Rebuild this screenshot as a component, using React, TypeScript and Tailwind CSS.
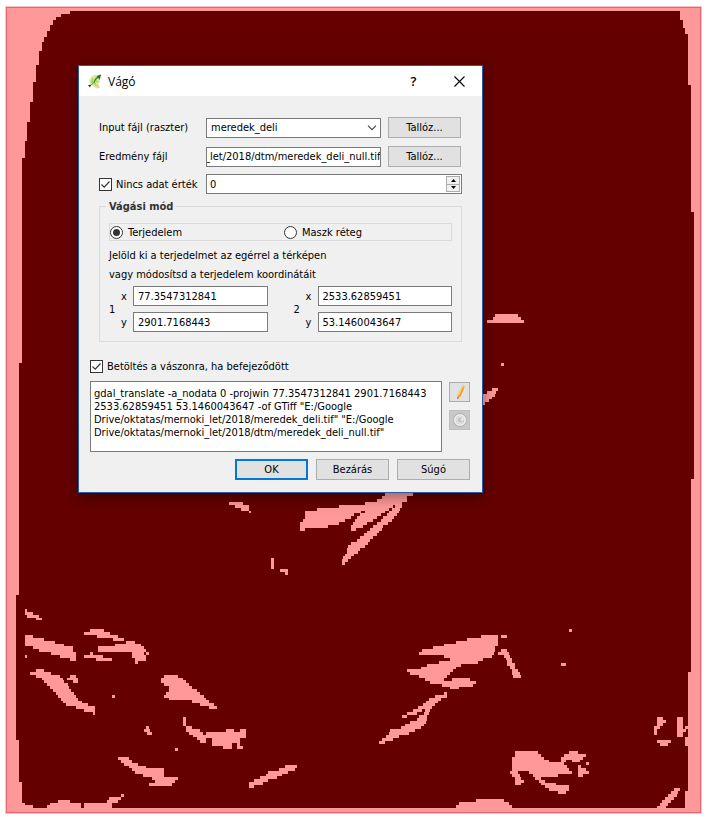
import { useEffect, useRef, useState, type ReactNode } from "react";

/* Bright patches of the raster. Each patch starts at y and lists one
   array of [x1, x2, x1, x2, ...] spans per raster row. Units are thirds of a pixel. */
type Patch = { y: number; rows: number[][] };
type Layer = { ox: number; oy: number; patches: Patch[] };

const ROW = 8.6;

const layers: Layer[] = [
  {
    ox: 0,
    oy: 600,
    patches: [
      { y: 27, rows: [[75, 81], [75, 99], [81, 117], [108, 126]] },
      { y: 88, rows: [[270, 312], [253, 330], [291, 355], [338, 371]] },
      { y: 105, rows: [[75, 99], [75, 131], [75, 164], [75, 193], [99, 219], [117, 219], [153, 228], [75, 81, 180, 228], [210, 228]] },
      { y: 122, rows: [[379, 404], [345, 424], [295, 433], [295, 437], [397, 433, 437, 446], [397, 437], [404, 437], [404, 413]] },
      { y: 156, rows: [[270, 279], [253, 310], [288, 336]] },
      { y: 207, rows: [[108, 132], [90, 153], [108, 180], [126, 190], [132, 193], [141, 204], [150, 207], [158, 213], [167, 222], [175, 228], [182, 234], [190, 246], [199, 264], [228, 284], [252, 284], [279, 285]] },
      { y: 224, rows: [[210, 228], [202, 234], [219, 234]] },
      { y: 284, rows: [[336, 345]] },
      { y: 224, rows: [[492, 534], [483, 550], [483, 558], [492, 567], [507, 575], [507, 592], [498, 600], [492, 612], [507, 617], [575, 627], [600, 643], [627, 651]] },
      { y: 352, rows: [[549, 558], [549, 558], [549, 558], [558, 575], [558, 600], [567, 610], [580, 617], [592, 617], [600, 617]] },
      { y: 387, rows: [[678, 702, 720, 738], [617, 738], [617, 738], [636, 720], [636, 720], [636, 696, 710, 720], [668, 696, 710, 729]] },
      { y: 378, rows: [[438, 447], [433, 450], [441, 456]] },
      { y: 445, rows: [[525, 534]] },
      { y: 471, rows: [[353, 387], [362, 395], [371, 413], [387, 437], [395, 492], [404, 492], [429, 492], [455, 534], [465, 525], [447, 517]] },
      { y: 495, rows: [[855, 890], [838, 884], [805, 865], [797, 847], [780, 830], [762, 805], [747, 790], [747, 762]] },
      { y: 582, rows: [[363, 371], [327, 362], [175, 210, 320, 355], [66, 75, 150, 243, 251, 335], [66, 99, 141, 243, 251, 335]] },
    ],
  },
  {
    ox: 300,
    oy: 600,
    patches: [
      { y: 105, rows: [[543, 594, 603, 621], [501, 594], [468, 594], [432, 594], [399, 585], [366, 585], [358, 582], [432, 575], [449, 550], [418, 535], [382, 484], [364, 468], [320, 459], [330, 450], [358, 441], [376, 432, 455, 510], [390, 527], [427, 520], [450, 477]] },
      { y: 147, rows: [[603, 621], [595, 627], [612, 630], [618, 636], [621, 636], [621, 645], [630, 645], [636, 654], [636, 660], [639, 663]] },
      { y: 88, rows: [[807, 816]] },
      { y: 190, rows: [[783, 798]] },
      { y: 276, rows: [[432, 441], [406, 441], [388, 424], [379, 415], [370, 406], [353, 397], [340, 367, 376, 390], [322, 350, 372, 388], [306, 320, 358, 381], [350, 381], [330, 378], [315, 372], [303, 364], [270, 345], [268, 327], [259, 297], [246, 280], [237, 255]] },
      { y: 453, rows: [[645, 714, 807, 834], [645, 722, 792, 858], [636, 732, 783, 849], [636, 747, 783, 798, 816, 840], [636, 792, 858, 867], [636, 800, 834, 843], [636, 808, 834, 858], [630, 654, 688, 816, 834, 867], [636, 660, 698, 775, 834, 849], [645, 663, 706, 722], [645, 671, 716, 735], [645, 663, 724, 768], [735, 807], [747, 807], [774, 798]] },
      { y: 598, rows: [[528, 612], [477, 627], [468, 636]] },
      { y: 352, rows: [[1071, 1089, 1131, 1149], [1071, 1098, 1131, 1149], [1071, 1089, 1131, 1149], [1062, 1080, 1131, 1149, 1155, 1164], [1062, 1071, 1131, 1158], [1062, 1071, 1131, 1149], [1131, 1149], [1155, 1164], [1071, 1113, 1155, 1164], [1080, 1104, 1155, 1164]] },
      { y: 565, rows: [[1122, 1140], [1113, 1134], [1104, 1131], [1095, 1122], [1086, 1113], [1080, 1104], [1071, 1098]] },
    ],
  },
  {
    ox: 210,
    oy: 480,
    patches: [
      { y: 66, rows: [[57, 98], [75, 117], [93, 117], [117, 123]] },
      { y: 40, rows: [[525, 609], [516, 592], [500, 590], [465, 575], [388, 550, 555, 575], [322, 538, 545, 570], [286, 452, 465, 525, 538, 567], [286, 432, 450, 513, 530, 560], [286, 424, 441, 500, 520, 552], [280, 405, 436, 488, 512, 545], [270, 388, 428, 472, 500, 535], [270, 355, 423, 460, 490, 520], [270, 285, 423, 438, 480, 517], [470, 508], [462, 500], [450, 490], [440, 480], [422, 474], [415, 465], [412, 450], [410, 445], [405, 432], [400, 424], [397, 414], [397, 405]] },
      { y: 234, rows: [[183, 192], [183, 192], [183, 192], [183, 192], [210, 234], [225, 234]] },
    ],
  },
  {
    ox: 280,
    oy: 195,
    patches: [{ y: 357, rows: [[645, 714], [639, 722], [621, 732]] }],
  },
  {
    ox: 280,
    oy: 350,
    patches: [
      { y: 38, rows: [[663, 672]] },
      { y: 114, rows: [[636, 654], [620, 648], [600, 645], [600, 636], [600, 627], [600, 615]] },
    ],
  },
];

function spans({ ox, oy, patches }: Layer) {
  let d = "";
  for (const p of patches) {
    p.rows.forEach((row, i) => {
      const top = Math.round(oy + (p.y + i * ROW) / 3);
      const bottom = Math.round(oy + (p.y + (i + 1) * ROW) / 3);
      for (let k = 0; k < row.length; k += 2) {
        const a = Math.round(ox + row[k] / 3);
        const b = Math.round(ox + row[k + 1] / 3);
        d += `M${a} ${top}H${b}V${bottom}H${a}Z`;
      }
    });
  }
  return d;
}

function RasterMap() {
  return (
    <svg viewBox="0 0 706 817" className="block w-full" shapeRendering="crispEdges" aria-hidden="true">
      <rect x="5" y="6" width="697" height="808" fill="#ffc4c6" />
      <rect x="6" y="7" width="695" height="806" fill="#e9636f" />
      <rect x="7" y="8" width="693" height="804" fill="#ff9999" />
      <path
        fill="#640000"
        d="M70 11H680V20H683V28H685V34H688V85H691V212H694V479H691V672H688V791H685V808H22V782H19V740H16V595H19V363H22V158H25V141H27V122H30V102H33V82H36V65H39V51H42V42H44V37H47V31H50V25H53V20H56V17H61V14H70Z"
      />
      {layers.map((layer, i) => (
        <path key={i} d={spans(layer)} fill="#ff9999" />
      ))}
    </svg>
  );
}

function AppLogo() {
  return (
    <svg viewBox="0 0 16 16" className="size-4" aria-hidden="true">
      <path d="M9 2C6 2 3 4 2.500 7.500 2.200 10 3 12 5 12.500L9.500 15.500l3.500-.5-2-3.500c2-1.500 2.500-4 1.500-6.500Z" fill="#dbe9a4" />
      <path d="M6 5.500 4.500 9l3 1 1.500 2.500M9 8l2 1" fill="none" stroke="#b2d05a" strokeWidth="1.800" />
      <path d="m9 12 1.500 2.500 2-.3L11 11.500Z" fill="#c3da74" />
      <path d="M12.500 3.500c-3 1-4.500 3-5.500 6" fill="none" stroke="#3b8f35" strokeWidth="1.500" />
      <path d="m9.500 3 4.700-1.500L12.500 7l-1-2Z" fill="#1f7030" />
      <path d="M7.500 9 3 13" stroke="#6f9f3a" strokeWidth="1" />
      <path d="m1 12 3.200-.3L3 14.500Z" fill="#123d18" />
    </svg>
  );
}

const field =
  "h-5 w-full min-w-0 appearance-none rounded-none border border-[#7a7a7a] bg-white px-1 outline-none";

function PushButton({ children, primary = false }: { children: ReactNode; primary?: boolean }) {
  return (
    <button
      type="button"
      className={
        primary
          ? "h-[21px] w-[73px] shrink-0 border-2 border-[#0078d7] bg-[#e1e1e1]"
          : "h-[21px] w-[73px] shrink-0 border border-[#adadad] bg-[#e1e1e1]"
      }
    >
      {children}
    </button>
  );
}

function CheckBox({ label }: { label: string }) {
  const [on, setOn] = useState(true);
  return (
    <label className="flex items-center gap-1 whitespace-nowrap">
      <span className="grid size-[13px] shrink-0">
        <input
          type="checkbox"
          checked={on}
          onChange={(e) => setOn(e.target.checked)}
          className="col-start-1 row-start-1 size-[13px] appearance-none border border-[#333333] bg-white"
        />
        {on && (
          <svg viewBox="0 0 13 13" className="pointer-events-none col-start-1 row-start-1 size-[13px]" aria-hidden="true">
            <path d="m2.500 6.500 2.700 2.700 5.300-5.700" fill="none" stroke="#333" strokeWidth="1.200" />
          </svg>
        )}
      </span>
      {label}
    </label>
  );
}

function Radio({ label, value, mode, onPick }: { label: string; value: string; mode: string; onPick: (v: string) => void }) {
  return (
    <label className="flex items-center gap-[5px]">
      <span className="grid size-[13px] shrink-0 place-items-center">
        <input
          type="radio"
          name="mode"
          checked={mode === value}
          onChange={() => onPick(value)}
          className="col-start-1 row-start-1 size-[13px] appearance-none rounded-full border border-[#333333] bg-white"
        />
        {mode === value && <span className="pointer-events-none col-start-1 row-start-1 size-[7px] rounded-full bg-[#333333]" />}
      </span>
      {label}
    </label>
  );
}

function Corner({ n, x, y }: { n: string; x: string; y: string }) {
  return (
    <div className="grid min-w-0 flex-1 grid-cols-[12px_12px_1fr] items-center gap-y-[6px]">
      <span className="row-span-2">{n}</span>
      <label htmlFor={"x" + n}>x</label>
      <input id={"x" + n} className={field} defaultValue={x} />
      <label htmlFor={"y" + n}>y</label>
      <input id={"y" + n} className={field} defaultValue={y} />
    </div>
  );
}

function ClipperDialog() {
  const [mode, setMode] = useState("extent");
  const output = useRef<HTMLInputElement>(null);
  useEffect(() => {
    if (output.current) output.current.scrollLeft = output.current.scrollWidth;
  }, []);

  return (
    <section
      role="dialog"
      aria-labelledby="title"
      className="absolute top-[65px] left-[78px] w-[405px] border border-[#2a5ba8] bg-[#f0f0f0] font-['DejaVu_Sans_Condensed','Noto_Sans',sans-serif] text-[11px] leading-[13px] text-black shadow-[0_4px_14px_rgba(0,0,0,0.4)]"
    >
      <header className="flex h-[30px] items-center bg-white pl-2">
        <AppLogo />
        <h1 id="title" className="ml-[5px] flex-1 font-['Open_Sans',sans-serif] text-[12px]">
          Vágó
        </h1>
        <button type="button" className="h-full w-[45px] font-['Open_Sans',sans-serif] text-[13px] font-semibold">
          ?
        </button>
        <button type="button" aria-label="Bezárás" className="grid h-full w-[46px] place-items-center">
          <svg viewBox="0 0 11 11" className="size-[11px]" aria-hidden="true">
            <path d="m.5.5 10 10m0-10-10 10" stroke="#000" strokeWidth="1.100" />
          </svg>
        </button>
      </header>

      <div className="pt-[21px] pr-3 pb-3 pl-[11px]">
        <div className="pr-2 pl-[9px]">
          <div className="grid grid-cols-[107px_1fr_73px] items-center gap-y-2 pr-px">
            <label htmlFor="input">Input fájl (raszter)</label>
            <div className="mr-[7px] grid items-center">
              <select id="input" className={field + " col-start-1 row-start-1"}>
                <option>meredek_deli</option>
              </select>
              <svg viewBox="0 0 10 6" className="pointer-events-none col-start-1 row-start-1 mr-1 h-[6px] w-[10px] justify-self-end" aria-hidden="true">
                <path d="m1 .7 4 4 4-4" fill="none" stroke="#444" strokeWidth="1.100" />
              </svg>
            </div>
            <PushButton>Tallóz...</PushButton>
            <label htmlFor="output">Eredmény fájl</label>
            <div className="mr-[7px]">
              <input
                id="output"
                ref={output}
                defaultValue="_let/2018/dtm/meredek_deli_null.tif"
                className="h-5 w-full border border-[#7a7a7a] bg-white text-right outline-none"
              />
            </div>
            <PushButton>Tallóz...</PushButton>
          </div>

          <div className="mt-[7px] grid grid-cols-[107px_1fr] items-center">
            <CheckBox label="Nincs adat érték" />
            <div className="flex h-5 border border-[#7a7a7a] bg-white">
              <input aria-label="Nincs adat érték" defaultValue="0" className="min-w-0 flex-1 bg-white px-[3px] outline-none" />
              <div className="m-px flex w-[14px] flex-col border border-[#adadad] bg-[#f0f0f0]">
                <button type="button" aria-label="+" className="grid flex-1 place-items-center border-b border-[#adadad]">
                  <svg viewBox="0 0 5 3" className="h-[3px] w-[5px]" aria-hidden="true"><path d="M0 3h5L2.500 0Z" /></svg>
                </button>
                <button type="button" aria-label="-" className="grid flex-1 place-items-center">
                  <svg viewBox="0 0 5 3" className="h-[3px] w-[5px]" aria-hidden="true"><path d="M0 0h5L2.500 3Z" /></svg>
                </button>
              </div>
            </div>
          </div>

          <fieldset className="mt-[6px] border border-[#dcdcdc] px-[9px] pb-[9px]">
            <legend className="-ml-[3px] px-[3px] font-bold text-[#333333]">Vágási mód</legend>
            <div className="mt-[10px] grid h-[18px] grid-cols-[174px_1fr] items-center border border-[#dcdcdc]">
              <Radio label="Terjedelem" value="extent" mode={mode} onPick={setMode} />
              <Radio label="Maszk réteg" value="mask" mode={mode} onPick={setMode} />
            </div>
            <p className="mt-[5px] leading-[19px]">
              Jelöld ki a terjedelmet az egérrel a térképen
              <br />
              vagy módosítsd a terjedelem koordinátáit
            </p>
            <div className="mt-[2px] flex gap-[26px]">
              <Corner n="1" x="77.3547312841" y="2901.7168443" />
              <Corner n="2" x="2533.62859451" y="53.1460043647" />
            </div>
          </fieldset>
        </div>

        <div className="mt-[18px]">
          <CheckBox label="Betöltés a vászonra, ha befejeződött" />
        </div>

        <div className="mt-2 flex gap-[7px]">
          <textarea
            aria-label="gdal_translate"
            className="h-[71px] min-w-0 flex-1 resize-none overflow-hidden border border-[#7a7a7a] bg-white px-[3px] py-[5px] outline-none"
            defaultValue={
              'gdal_translate -a_nodata 0 -projwin 77.3547312841 2901.7168443\n2533.62859451 53.1460043647 -of GTiff "E:/Google\nDrive/oktatas/mernoki_let/2018/meredek_deli.tif" "E:/Google\nDrive/oktatas/mernoki_let/2018/dtm/meredek_deli_null.tif"'
            }
          />
          <div className="flex flex-col gap-2 pt-px">
            <button type="button" aria-label="edit" className="grid h-5 w-[21px] place-items-center border border-[#adadad] bg-[#e1e1e1]">
              <svg viewBox="0 0 16 16" className="size-4" aria-hidden="true">
                <path d="M10 2.500 12.500 3.500 8.500 12.500 5.300 15 5.800 11Z" fill="#f39c1f" />
                <path d="M10 2.500 11 2.900 7 11.700 5.800 11Z" fill="#ffd27a" />
                <path d="m10 2.500.8-1.500 2.400.9-.7 1.600Z" fill="#e8c08f" />
                <path d="m5.300 15 .2-1.800 1.200.7Z" fill="#555" />
              </svg>
            </button>
            <button type="button" aria-label="reset" disabled className="grid h-5 w-[21px] place-items-center border border-[#bfbfbf] bg-[#c8c8c8]">
              <svg viewBox="0 0 16 16" className="size-4" aria-hidden="true">
                <circle cx="8" cy="8" r="7" fill="#b0b0b0" />
                <circle cx="8" cy="8" r="5.200" fill="#c4c4c4" stroke="#ededed" strokeWidth="1.800" />
                <path d="M10.800 6.200A3.200 3.200 0 1 0 11 9.500" fill="none" stroke="#e4e4e4" strokeWidth="1.500" />
                <path d="M11.500 5v3.500H8Z" fill="#f2f2f2" />
              </svg>
            </button>
          </div>
        </div>

        <div className="mt-[7px] flex justify-end gap-2">
          <PushButton primary>OK</PushButton>
          <PushButton>Bezárás</PushButton>
          <PushButton>Súgó</PushButton>
        </div>
      </div>
    </section>
  );
}

export default function App() {
  return (
    <main className="relative bg-white">
      <RasterMap />
      <ClipperDialog />
    </main>
  );
}
